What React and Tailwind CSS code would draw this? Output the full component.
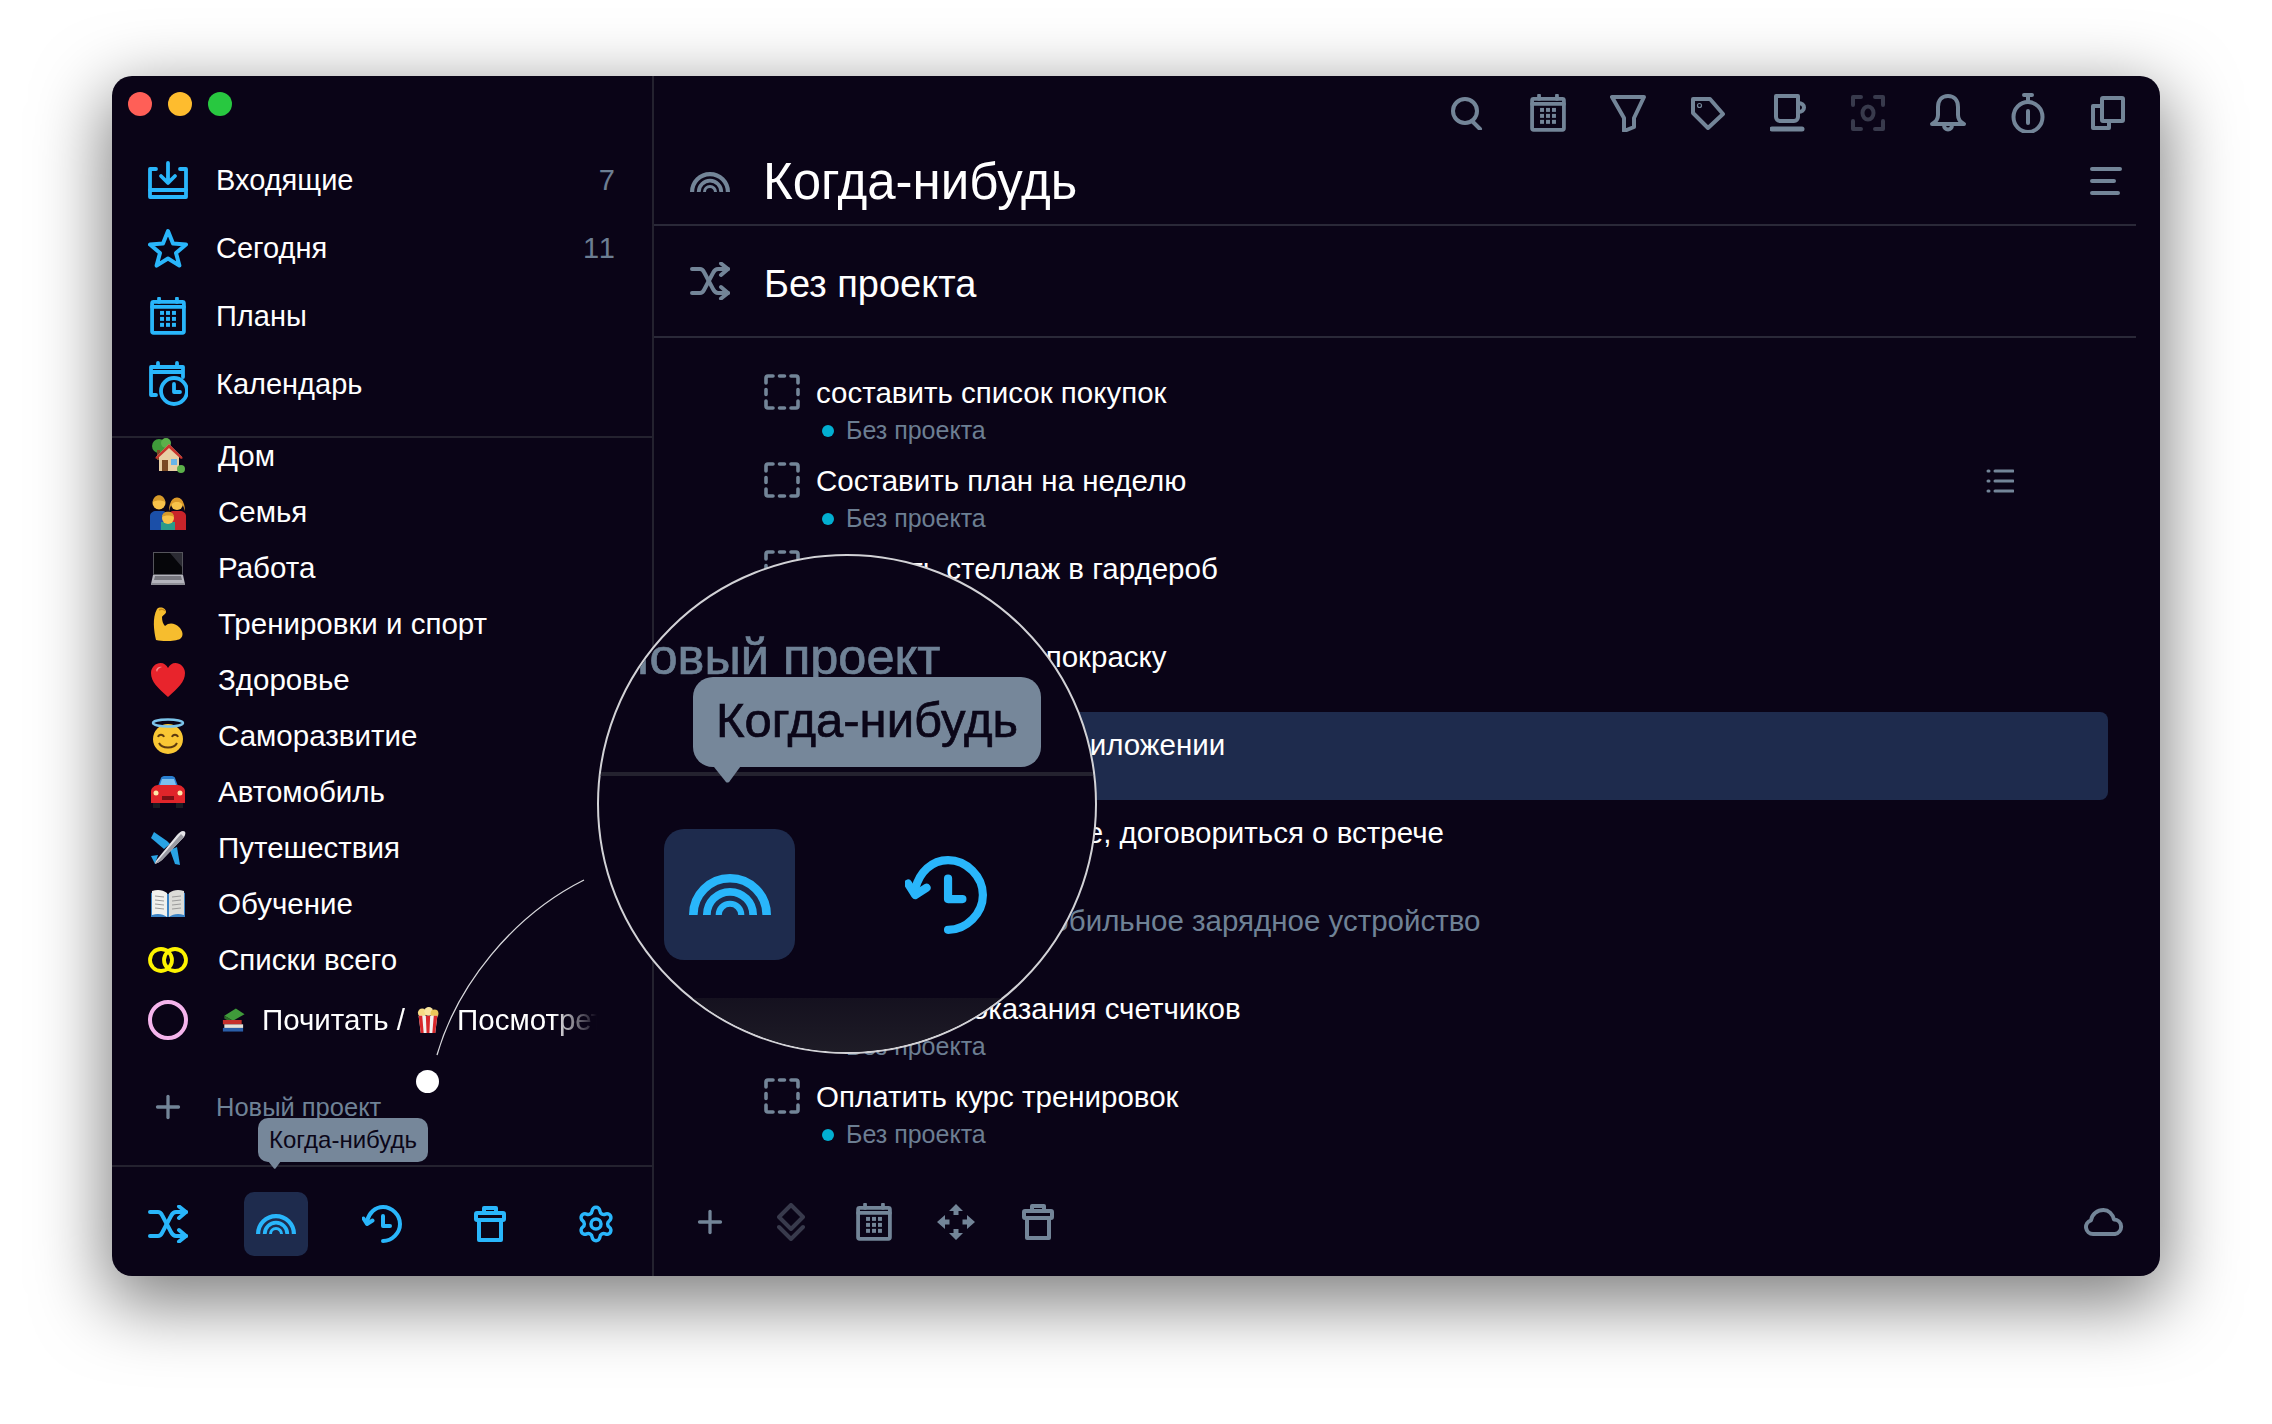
import { Settings, Plus } from "lucide-react";

const BLUE = "#29b6fb";
const GREY = "#738598";
const DIM = "#383a4c";

// ---------- line icons ----------
const Ico = ({ w, h, vb, color = GREY, sw = 4, className = "", children }) => (
  <svg width={w} height={h} viewBox={vb || `0 0 ${w} ${h}`} fill="none" stroke={color} strokeWidth={sw} strokeLinecap="round" strokeLinejoin="round" className={`shrink-0 ${className}`}>
    {children}
  </svg>
);

const InboxIcon = () => (
  <Ico w={40} h={38} color={BLUE} sw={3.8}>
    <path d="M8 8H2v28h36V8h-6" />
    <path d="M2 29h36" />
    <path d="M20 2v19M13 15l7 7 7-7" />
  </Ico>
);
const StarIcon = () => (
  <Ico w={40} h={40} color={BLUE} sw={4}>
    <path d="M20 3l5 12.5 13 1-10 8.5 3.4 12.6L20 30.5 8.6 37.6 12 25 2 16.5l13-1z" />
  </Ico>
);
const CalendarIcon = ({ color = GREY, size = 36, sw = 3.8 }) => (
  <svg width={size} height={size * 1.05} viewBox="0 0 36 38" fill="none" stroke={color} strokeWidth={sw} strokeLinecap="round" strokeLinejoin="round" className="shrink-0">
    <rect x="2" y="5" width="32" height="31" rx="1.5" />
    <path d="M2 10h32M9 1.500V5M27 1.500V5" />
    <g fill={color} stroke="none">
      {[10, 16, 22].map((x) => (
        <g key={x}>
          <rect x={x} y="14" width="4" height="4" />
          <rect x={x} y="20" width="4" height="4" />
          <rect x={x} y="26" width="4" height="4" />
        </g>
      ))}
    </g>
  </svg>
);
const CalClockIcon = () => (
  <Ico w={40} h={46} color={BLUE} sw={3.8}>
    <path d="M8 34H3V6h32v10M3 11h32M10 2v4M29 2v4" />
    <circle cx="26" cy="30" r="13" />
    <path d="M26 23v8h6" />
  </Ico>
);
const Rainbow = ({ color = BLUE, scale = 1 }) => (
  <svg width={40 * scale} height={20 * scale} viewBox="0 0 40 20" fill="none" stroke={color} className="shrink-0">
    <path d="M2.100 20a17.900 17.900 0 0 1 35.800 0" strokeWidth="4.200" />
    <path d="M8.700 20a11.300 11.300 0 0 1 22.600 0" strokeWidth="3.800" />
    <path d="M14.500 20a5.500 5.500 0 0 1 11 0" strokeWidth="3" />
  </svg>
);
const ShuffleIcon = ({ color = BLUE }) => (
  <Ico w={40} h={38} color={color} sw={4}>
    <path d="M2 7h8c2 0 3 1 4 3l9 17c1 2 2 4 5 4h10" />
    <path d="M2 31h8c2 0 3-1 4-3l9-17c1-2 2-4 5-4h10" />
    <path d="M31 1.500l7 5.500-7 6M31 25l7 6-7 5.500" />
  </Ico>
);
const HistoryIcon = ({ scale = 1 }) => (
  <svg width={40 * scale} height={38 * scale} viewBox="0 0 40 38" fill="none" stroke={BLUE} strokeWidth="4" strokeLinecap="round" strokeLinejoin="round" className="shrink-0">
    <path d="M21 36c9 0 17-8 17-17S30 2 21 2C13 2 7 8 5 16" />
    <path d="M1.500 13.500L5 19l5.500-3.500" />
    <path d="M21 11v10h7" />
  </svg>
);
const TrashIcon = ({ color = BLUE, sw = 4 }) => (
  <Ico w={32} h={36} color={color} sw={sw}>
    <path d="M10 7V2h12v5" />
    <rect x="2" y="7" width="28" height="7" rx="1" />
    <path d="M5 14v20h22V14" />
  </Ico>
);
const SearchIcon = () => (
  <Ico w={34} h={34}>
    <circle cx="14" cy="15" r="12" />
    <path d="M22 26l7 7" />
  </Ico>
);
const FunnelIcon = () => (
  <Ico w={36} h={38}>
    <path d="M2 3h32L24 24v9l-10 4V24z" />
  </Ico>
);
const TagIcon = () => (
  <Ico w={34} h={34}>
    <path d="M2 3h17l13 15-15 14L2 17z" />
    <circle cx="8.500" cy="9.500" r="0.600" />
  </Ico>
);
const CupIcon = () => (
  <Ico w={36} h={38}>
    <path d="M6 2h22v21a4 4 0 0 1-4 4H10a4 4 0 0 1-4-4z" />
    <path d="M28 9c4 0 6 2 6 4.500S32 18 28 18" />
    <path d="M2 35h30" strokeWidth="5" />
  </Ico>
);
const FocusIcon = () => (
  <Ico w={34} h={36} color={DIM}>
    <path d="M10 2H2v8M24 2h8v8M10 34H2v-8M24 34h8v-8" />
    <ellipse cx="17" cy="18" rx="5.500" ry="6.500" />
  </Ico>
);
const BellIcon = () => (
  <Ico w={38} h={38}>
    <path d="M3 30c4-2 6-4 6-9v-8c0-7 4-11 10-11s10 4 10 11v8c0 5 2 7 6 9z" />
    <path d="M15 31c0 6 8 6 8 0" />
  </Ico>
);
const TimerIcon = () => (
  <Ico w={34} h={40}>
    <ellipse cx="17" cy="24" rx="14.500" ry="15" />
    <path d="M17 7V2M13 2h8" />
    <path d="M17 18v12" />
  </Ico>
);
const CopyIcon = () => (
  <Ico w={34} h={34}>
    <rect x="11" y="2" width="21" height="23" rx="1" />
    <path d="M11 10H2v22h16v-7" />
  </Ico>
);
const MenuIcon = () => (
  <Ico w={32} h={28}>
    <path d="M2 2h28M2 14h22M2 26h26" />
  </Ico>
);
const DashedCheck = ({ color = GREY }) => (
  <Ico w={36} h={36} color={color} sw={3.6}>
    <path d="M2 9V4a2 2 0 0 1 2-2h5M27 2h5a2 2 0 0 1 2 2v5M34 27v5a2 2 0 0 1-2 2h-5M9 34H4a2 2 0 0 1-2-2v-5" />
    <path d="M15.500 2h5M15.500 34h5M2 15.500v5M34 15.500v5" />
  </Ico>
);
const ListIcon = () => (
  <Ico w={28} h={28} sw={3}>
    <path d="M9 4h18M9 14h18M9 24h18M2 4h1M2 14h1M2 24h1" />
  </Ico>
);
const StackIcon = () => (
  <Ico w={28} h={38} color={DIM}>
    <path d="M14 2l12 12-12 12L2 14z" />
    <path d="M2 24l12 12 12-12" />
  </Ico>
);
const MoveIcon = () => (
  <svg width="40" height="36" viewBox="0 0 40 36" fill={GREY} className="shrink-0">
    <path d="M20 0l7 7h-4.500v4h-5V7H13zM20 36l-7-7h4.500v-4h5v4H27zM1 18l8-7v4.500h4.500v5H9V25zM39 18l-8 7v-4.500h-4.500v-5H31V11z" />
  </svg>
);
const CloudIcon = () => (
  <Ico w={40} h={28}>
    <path d="M9 26a7 7 0 0 1-2-13.700C8 6 13.500 2 19.500 2c5 0 9 4 10.500 9.500A7.300 7.300 0 0 1 31 26z" />
  </Ico>
);

// ---------- emoji drawn by hand ----------
const E = ({ size = 36, children }) => (
  <svg width={size} height={size} viewBox="0 0 36 36" className="shrink-0">{children}</svg>
);
const HouseEmoji = () => (
  <E>
    <circle cx="9" cy="8" r="7" fill="#3f9a3a" /><circle cx="16" cy="5" r="5" fill="#5cb04a" />
    <rect x="7" y="12" width="3" height="10" fill="#7a4a24" />
    <path d="M19 6L6 19h3v14h20V19h3z" fill="#e8cfa4" /><path d="M19 6L5 20l2 1L19 10l12 11 2-1z" fill="#c8342c" />
    <rect x="12" y="22" width="6" height="11" fill="#7a4a24" /><rect x="21" y="21" width="6" height="6" fill="#68b5e8" />
    <circle cx="31" cy="31" r="4" fill="#5cb04a" />
  </E>
);
const FamilyEmoji = () => (
  <E>
    <path d="M0 36V22c0-3 3-5 6-5h6c3 0 5 2 5 5v14z" fill="#1b4fa8" />
    <path d="M18 36V22c0-3 3-5 6-5h6c3 0 6 2 6 5v14z" fill="#c9242a" />
    <circle cx="9" cy="9" r="6.500" fill="#f8c24a" /><path d="M3 8c0-9 12-9 12 0-3-2-9-2-12 0z" fill="#d69a2a" />
    <circle cx="27" cy="10" r="6" fill="#f8c24a" /><path d="M19 17c0-18 16-18 16 0-2-6-3-9-8-9s-6 3-8 9z" fill="#dd9a2a" />
    <rect x="11" y="28" width="14" height="8" fill="#2a9a8a" /><circle cx="18" cy="24" r="6" fill="#f8c24a" />
    <path d="M12 23c0-7 12-7 12 0-3-2-9-2-12 0z" fill="#d69a2a" />
  </E>
);
const LaptopEmoji = () => (
  <E>
    <path d="M3 2h30v23H3z" fill="#55555c" /><path d="M4 3h28v21H4z" fill="#06060a" /><path d="M20 3h12v14z" fill="#2b2b33" />
    <path d="M3 25h30l2 9H1z" fill="#b4b4bc" /><path d="M5 26h26l1 4H4z" fill="#77777f" /><rect x="1" y="33" width="34" height="2" fill="#8e8e96" />
  </E>
);
const ArmEmoji = () => (
  <E>
    <path d="M7 3c3-3 9-1 9 3 0 2-3 3-4 5 0 4 1 7 3 9 4-4 10-3 14 1 4 4 5 9 1 12-4 2-16 3-24 1C4 25 2 12 7 3z" fill="#f6bd2e" />
    <path d="M9 4c2-1 5-1 6 1" stroke="#c98a17" fill="none" strokeWidth="1.500" />
  </E>
);
const HeartEmoji = () => (
  <E>
    <path d="M18 35C8 26 1 20 1 11 1 5 6 1 10.500 1c3.500 0 6 2 7.500 5 1.500-3 4-5 7.500-5C30 1 35 5 35 11c0 9-7 15-17 24z" fill="#e8242c" />
    <path d="M6 8c1-3 4-4 6-3-3 1-4 2-5 5z" fill="#f78a8a" />
  </E>
);
const HaloEmoji = () => (
  <E>
    <circle cx="18" cy="21" r="15" fill="#f9c734" />
    <ellipse cx="18" cy="5" rx="15" ry="3.500" fill="none" stroke="#7cc4ea" strokeWidth="2.400" />
    <path d="M8 19c1-3 5-3 6 0M22 19c1-3 5-3 6 0" stroke="#5c3a10" strokeWidth="1.800" fill="none" />
    <path d="M9 25c3 6 15 6 18 0" stroke="#5c3a10" strokeWidth="2" fill="none" />
  </E>
);
const CarEmoji = () => (
  <E>
    <path d="M8 12l3-8c0-1 2-2 3-2h8c1 0 3 1 3 2l3 8z" fill="#2a7fd0" />
    <path d="M10 11l2-6h12l2 6z" fill="#7cc0ee" />
    <path d="M1 17c0-3 4-6 7-6h20c3 0 7 3 7 6v12H1z" fill="#e0252a" />
    <rect x="3" y="29" width="7" height="5" fill="#1b1b22" /><rect x="26" y="29" width="7" height="5" fill="#1b1b22" />
    <rect x="12" y="22" width="12" height="4" fill="#7a1015" /><circle cx="6" cy="19" r="2.500" fill="#ffe9a8" /><circle cx="30" cy="19" r="2.500" fill="#ffe9a8" />
  </E>
);
const PlaneEmoji = () => (
  <E>
    <path d="M4 2l13 9 3 3-6 5L1 8z" fill="#29a3e4" /><path d="M20 20l5 14 5 1-3-18z" fill="#29a3e4" />
    <path d="M1 26l7-1-3 9z" fill="#29a3e4" />
    <path d="M33 1c3 0 3 3 1 6L12 30c-2 2-5 3-7 4 0-2 2-5 4-7L27 5c2-2 4-4 6-4z" fill="#e4e4e8" />
    <path d="M34 7L12 30c-2 2-5 3-7 4l26-30z" fill="#9a9aa2" />
  </E>
);
const BookEmoji = () => (
  <E>
    <path d="M1 7c6-3 12-2 17 1 5-3 11-4 17-1v24H1z" fill="#3a82c4" />
    <path d="M2 5c6-2 11-1 15 2v24c-4-3-9-4-15-2z" fill="#f1f1ee" /><path d="M34 5c-6-2-11-1-15 2v24c4-3 9-4 15-2z" fill="#dcdcd8" />
    <path d="M5 10l9 1M5 14l9 1M5 18l9 1M5 22l9 1M22 11l9-1M22 15l9-1M22 19l9-1M22 23l9-1" stroke="#9b9b9b" strokeWidth="1.200" />
  </E>
);
const RingsIcon = () => (
  <Ico w={40} h={26} color="#fdf300" sw={3.8}>
    <circle cx="13" cy="13" r="11" />
    <circle cx="27" cy="13" r="11" />
  </Ico>
);
const BooksEmoji = () => (
  <E size={26}>
    <path d="M6 12L22 2l12 8-16 9z" fill="#3f9a3a" /><path d="M6 12l12 7v4L6 16z" fill="#2b6b28" />
    <rect x="4" y="18" width="26" height="6" fill="#c5302c" /><rect x="6" y="24" width="26" height="5" fill="#e6e2d8" />
    <rect x="4" y="29" width="28" height="5" fill="#2a5ea8" />
  </E>
);
const PopcornEmoji = () => (
  <E size={26}>
    <circle cx="10" cy="8" r="6" fill="#f6dc84" /><circle cx="19" cy="6" r="6" fill="#f9e6a0" /><circle cx="27" cy="9" r="5.500" fill="#e9c85a" />
    <path d="M5 12h26l-3 24H8z" fill="#f2f2f2" />
    <path d="M5 12h5l2 24H8zM15 12h6l-1 24h-4zM26 12h5l-3 24h-4z" fill="#d8282c" />
  </E>
);

const nav = [
  { icon: <InboxIcon />, label: "Входящие", count: "7" },
  { icon: <StarIcon />, label: "Сегодня", count: "11" },
  { icon: <CalendarIcon color={BLUE} />, label: "Планы" },
  { icon: <CalClockIcon />, label: "Календарь" },
];

const projects = [
  { icon: <HouseEmoji />, label: "Дом" },
  { icon: <FamilyEmoji />, label: "Семья" },
  { icon: <LaptopEmoji />, label: "Работа" },
  { icon: <ArmEmoji />, label: "Тренировки и спорт" },
  { icon: <HeartEmoji />, label: "Здоровье" },
  { icon: <HaloEmoji />, label: "Саморазвитие" },
  { icon: <CarEmoji />, label: "Автомобиль" },
  { icon: <PlaneEmoji />, label: "Путешествия" },
  { icon: <BookEmoji />, label: "Обучение" },
  { icon: <RingsIcon />, label: "Списки всего" },
];

const tasks = [
  { title: "составить список покупок" },
  { title: "Составить план на неделю", list: true },
  { title: "Заказать стеллаж в гардероб" },
  { title: "Отвезти диск на покраску" },
  { title: "Настроить фон в приложении", active: true },
  { title: "Позвонить в сервисе, договориться о встрече" },
  { title: "Выбрать новое мобильное зарядное устройство", muted: true },
  { title: "Передать показания счетчиков" },
  { title: "Оплатить курс тренировок" },
];

const toolbar = [SearchIcon, CalendarIcon, FunnelIcon, TagIcon, CupIcon, FocusIcon, BellIcon, TimerIcon, CopyIcon];

function Arrow({ w, h, className }) {
  return (
    <svg width={w} height={h} viewBox="0 0 26 16" className={className}>
      <path d="M0 0h26L15 15q-2 1-3 0z" fill="#76879a" />
    </svg>
  );
}

function Sidebar() {
  return (
    <aside className="w-[542px] shrink-0 flex flex-col border-r-2 border-[#24222f]">
      <div className="flex gap-4 pl-4 pt-4 h-[70px]">
        <span className="w-6 h-6 rounded-full bg-[#ff5f57]" />
        <span className="w-6 h-6 rounded-full bg-[#febc2e]" />
        <span className="w-6 h-6 rounded-full bg-[#28c840]" />
      </div>

      <nav className="flex flex-col h-[292px] border-b-2 border-[#24222f]">
        {nav.map((n) => (
          <div key={n.label} className="h-[68px] shrink-0 flex items-center pl-9 pr-[35px]">
            <span className="w-10 flex justify-center shrink-0">{n.icon}</span>
            <span className="ml-[28px] mt-[1px] text-[29px] text-white">{n.label}</span>
            {n.count && <span className="ml-auto mt-[1px] text-[29px] text-[#6c7e92] tracking-[2px]">{n.count}</span>}
          </div>
        ))}
      </nav>

      <div className="h-[727px] overflow-hidden">
        <div className="-mt-[10px]">
          {projects.map((p) => (
            <div key={p.label} className="h-14 flex items-center pl-9">
              <span className="w-10 flex justify-center shrink-0">{p.icon}</span>
              <span className="ml-[30px] text-[29.500px] text-white">{p.label}</span>
            </div>
          ))}
          <div className="h-16 flex items-center pl-9">
            <span className="w-10 h-10 rounded-full border-4 border-[#f5b5ec] shrink-0" />
            <div className="ml-[32px] w-[377px] flex items-center overflow-hidden whitespace-nowrap text-[29.500px] text-white [mask-image:linear-gradient(to_right,black_88%,transparent_100%)]">
              <BooksEmoji />
              <span className="ml-4">Почитать /</span>
              <span className="ml-[10px]"><PopcornEmoji /></span>
              <span className="ml-4">Посмотреть</span>
            </div>
          </div>
          <div className="h-14 mt-[27px] flex items-center pl-9">
            <span className="w-10 flex justify-center shrink-0">
              <Plus size={36} color={GREY} strokeWidth={2.2} />
            </span>
            <span className="ml-[28px] text-[25.500px] text-[#6f8296]">Новый проект</span>
          </div>
        </div>
      </div>

      <div className="flex-1 border-t-2 border-[#24222f] flex items-center pl-9 pt-[5px]">
        <span className="w-10 flex justify-center"><ShuffleIcon /></span>
        <span className="ml-[56px] w-16 h-16 rounded-[10px] bg-[#1e2b4d] flex items-center justify-center">
          <Rainbow />
        </span>
        <span className="ml-[54px] w-10 flex justify-center"><HistoryIcon /></span>
        <span className="ml-[68px] w-10 flex justify-center"><TrashIcon /></span>
        <span className="ml-[66px] w-10 flex justify-center">
          <Settings size={44} color={BLUE} strokeWidth={2.1} />
        </span>
      </div>
    </aside>
  );
}

function TaskRow({ t }) {
  return (
    <div className={`h-[88px] shrink-0 flex items-start pl-[34px] pt-[14px] rounded-lg ${t.active ? "bg-[#1e2b4d]" : ""}`}>
      <DashedCheck />
      <div className="ml-4 pt-[3px]">
        <div className={`text-[29.500px] leading-8 ${t.muted ? "text-[#6f8296]" : "text-white"}`}>{t.title}</div>
        <div className="mt-[8px] flex items-center h-7">
          <span className="ml-[6px] w-3 h-3 rounded-full bg-[#02afd1]" />
          <span className="ml-3 text-[25px] text-[#6c7e92]">Без проекта</span>
        </div>
      </div>
      {t.list && (
        <span className="ml-auto mr-[94px] mt-[5px]">
          <ListIcon />
        </span>
      )}
    </div>
  );
}

function Main() {
  return (
    <main className="flex-1 min-w-0 flex flex-col">
      <div className="mr-6 h-[148px] border-b-2 border-[#2a2938] box-content">
        <div className="flex justify-end items-center gap-[44px] pr-[10px] h-[74px]">
          {toolbar.map((Icon, i) => (
            <span key={i} className="w-9 flex justify-center">
              <Icon />
            </span>
          ))}
        </div>
        <div className="flex items-center pl-[36px] pr-[14px] h-[64px]">
          <Rainbow color={GREY} />
          <h1 className="ml-[33px] text-[51px] font-normal text-white">Когда-нибудь</h1>
          <span className="ml-auto mb-[3px]"><MenuIcon /></span>
        </div>
      </div>

      <div className="mr-6 h-[110px] border-b-2 border-[#2a2938] box-content flex items-center pl-[36px]">
        <ShuffleIcon color={GREY} />
        <h2 className="ml-[34px] text-[38px] font-normal text-white mt-[6px]">Без проекта</h2>
      </div>

      <div className="flex-1 flex flex-col ml-[76px] mr-[52px] pt-[22px] overflow-hidden">
        {tasks.map((t) => (
          <TaskRow key={t.title} t={t} />
        ))}
      </div>

      <footer className="h-[108px] flex items-center pl-[36px] pr-[36px]">
        <span className="w-10 flex justify-center"><Plus size={36} color={GREY} strokeWidth={2.2} /></span>
        <span className="ml-[45px] w-8 flex justify-center"><StackIcon /></span>
        <span className="ml-[49px] w-9 flex justify-center"><CalendarIcon /></span>
        <span className="ml-[44px] w-10 flex justify-center"><MoveIcon /></span>
        <span className="ml-[46px] w-8 flex justify-center"><TrashIcon color={GREY} /></span>
        <span className="ml-auto"><CloudIcon /></span>
      </footer>
    </main>
  );
}

// лупа поверх окна
function Magnifier() {
  return (
    <div className="absolute left-[485px] top-[478px] w-[500px] h-[500px] rounded-full border-2 border-[#d2d2d6] bg-[#0a0417] overflow-hidden">
      <div className="absolute left-[14px] top-[71px] text-[50.500px] leading-[60px] whitespace-nowrap text-[#6f8296] [-webkit-text-stroke:0.7px_#6f8296]">Новый проект</div>
      <div className="absolute left-0 right-0 top-[216px] h-[4px] bg-[#24222f]" />
      <div className="absolute left-[94px] top-[121px] w-[348px] h-[90px] rounded-[20px] bg-[#76879a] flex items-center justify-center pb-[2px] text-[49px] text-[#0b0618] [-webkit-text-stroke:0.7px_#0b0618]">
        Когда-нибудь
      </div>
      <Arrow w={30} h={17} className="absolute left-[113px] top-[210px]" />
      <div className="absolute left-[65px] top-[273px] w-[131px] h-[131px] rounded-[20px] bg-[#1e2b4d] flex items-center justify-center">
        <Rainbow scale={2.05} />
      </div>
      <div className="absolute left-[306px] top-[300px]">
        <HistoryIcon scale={2.05} />
      </div>
      <div className="absolute left-0 right-0 top-[442px] h-[60px] bg-gradient-to-b from-[#15111f] to-[#1f1d27]" />
    </div>
  );
}

export default function App() {
  return (
    <div className="min-h-screen bg-white pt-[76px] pl-[112px] font-['Liberation_Sans',Arial,sans-serif]">
      <div className="relative w-[2048px] h-[1200px] rounded-[20px] bg-[#0a0417] flex shadow-[0_22px_70px_6px_rgba(0,0,0,0.5)]">
        <Sidebar />
        <Main />

        {/* подсказка над кнопкой */}
        <div className="absolute left-[146px] top-[1042px] w-[170px] h-11 rounded-[10px] bg-[#76879a] flex items-center justify-center text-[24px] text-[#0b0618]">
          Когда-нибудь
        </div>
        <Arrow w={15} h={8} className="absolute left-[155px] top-[1085px]" />

        <Magnifier />

        <svg width="200" height="200" viewBox="0 0 200 200" fill="none" className="absolute left-[310px] top-[790px]">
          <path d="M15 189C35 120 90 50 162 14" stroke="#d8d8dc" strokeWidth="1.300" />
        </svg>
        <span className="absolute left-[304px] top-[994px] w-[23px] h-[23px] rounded-full bg-white" />
      </div>
    </div>
  );
}
